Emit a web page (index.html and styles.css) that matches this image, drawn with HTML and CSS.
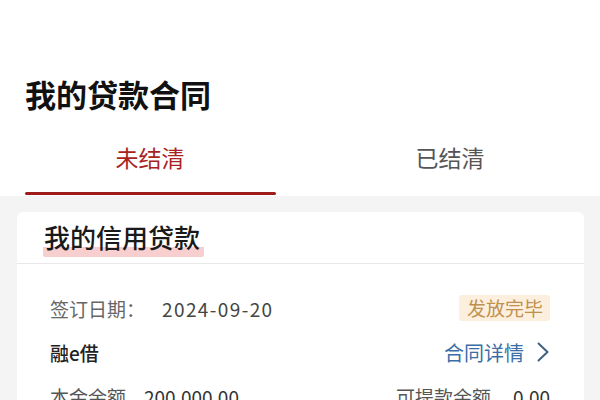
FILE: index.html
```html
<!DOCTYPE html>
<html lang="zh-CN">
<head>
<meta charset="utf-8">
<link rel="stylesheet" href="styles.css">
</head>
<body>
<div class="page">
  <header class="header">
    <h1 class="title">我的贷款合同</h1>
    <nav class="tabs">
      <div class="tab active"><span class="tab-text">未结清</span><span class="tab-line"></span></div>
      <div class="tab"><span class="tab-text">已结清</span><span class="tab-line"></span></div>
    </nav>
  </header>
  <main class="content">
    <section class="card">
      <div class="card-head"><span class="card-title">我的信用贷款</span></div>
      <div class="card-body">
        <div class="row">
          <div class="left"><span class="label">签订日期：</span><span class="date">2024-09-20</span></div>
          <span class="badge">发放完毕</span>
        </div>
        <div class="row">
          <div class="left"><span class="product">融e借</span></div>
          <a class="detail">合同详情<svg class="chev" width="16" height="22" viewBox="0 0 16 22"><path d="M3.5 2.5 L12.5 11 L3.5 19.5" fill="none" stroke="#3f5f86" stroke-width="2" stroke-linecap="round" stroke-linejoin="round"/></svg></a>
        </div>
        <div class="row">
          <div class="left"><span class="label2">本金余额</span><span class="value">200,000.00</span></div>
          <div class="right"><span class="label2">可提款余额</span><span class="value2">0.00</span></div>
        </div>
      </div>
    </section>
  </main>
</div>
</body>
</html>
```
FILE: styles.css
```css
* { box-sizing: border-box; }
html, body { margin: 0; padding: 0; }
body {
  width: 600px;
  height: 400px;
  overflow: hidden;
  background: #f4f4f4;
  font-family: "Noto Sans CJK SC", "Noto Sans", sans-serif;
}
.page { width: 600px; }
.header {
  background: #ffffff;
  padding-top: 74px;
}
.title {
  margin: 0;
  padding-left: 25px;
  font-size: 31px;
  line-height: 40px;
  font-weight: 700;
  color: #111111;
}
.tabs {
  display: flex;
  padding-top: 28px;
}
.tab {
  flex: 1;
  display: flex;
  flex-direction: column;
  align-items: center;
}
.tab-text {
  font-size: 23px;
  line-height: 30px;
  color: #555555;
}
.tab.active .tab-text { color: #a8231f; }
.tab-line {
  margin-top: 20px;
  width: 251px;
  height: 3px;
  border-radius: 2px;
  margin-bottom: 1px;
}
.tab.active .tab-line { background: #9e1c1c; }
.content {
  padding: 16px 16px 0 17px;
}
.card {
  background: #ffffff;
  border-radius: 6px;
}
.card-head {
  display: flex;
  align-items: flex-start;
  padding: 8px 0 6px 26px;
  border-bottom: 1px solid #e8e8ea;
}
.card-title {
  display: inline-block;
  font-size: 26px;
  line-height: 34px;
  font-weight: 500;
  color: #1a1a1a;
  padding: 0 4px 3px 1px;
  border-radius: 2px;
  background: linear-gradient(to bottom, transparent 27px, #f7cfcf 27px);
}
.card-body {
  padding: 22px 34px 0 33px;
}
.row {
  display: flex;
  align-items: center;
  justify-content: space-between;
  height: 44px;
  font-size: 19px;
}
.left, .right { display: flex; align-items: center; }
.label { color: #666666; }
.date { color: #444444; margin-left: 17px; letter-spacing: 1.4px; }
.badge {
  background: #fcefdd;
  color: #c0904f;
  padding: 0 7px 0 8px;
  line-height: 26px;
  border-radius: 3px;
}
.product { color: #222222; font-weight: 500; }
.detail {
  display: flex;
  align-items: center;
  font-size: 20px;
  color: #3a6ea6;
}
.chev { margin-left: 11px; margin-right: -1px; }
.label2 { color: #555555; }
.value { color: #333333; margin-left: 18px; }
.value2 { color: #333333; margin-left: 22px; }
```
